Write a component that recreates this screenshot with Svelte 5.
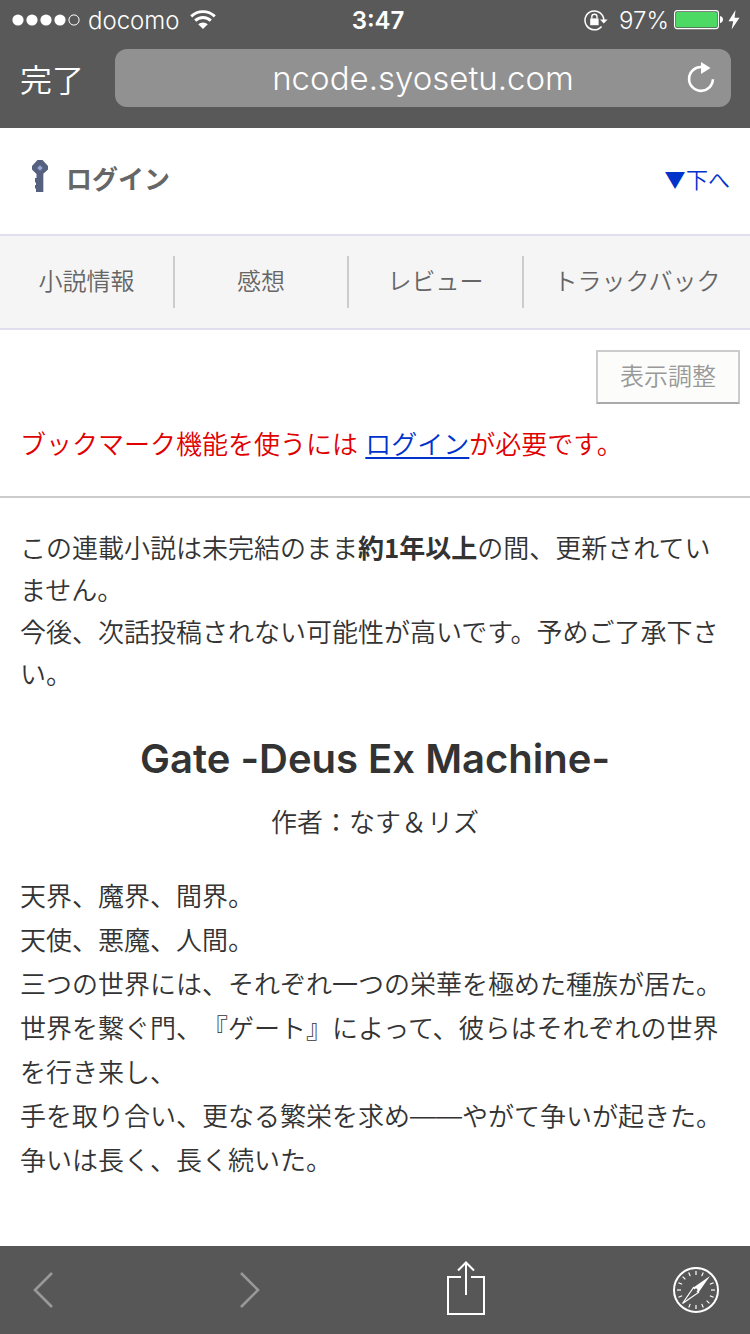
<script lang="ts">

  const signal: number[] = [1, 1, 1, 1, 0];

  const tabs: string[] = ['小説情報', '感想', 'レビュー', 'トラックバック'];

  const synopsis: string[] = [
    '天界、魔界、間界。',
    '天使、悪魔、人間。',
    '三つの世界には、それぞれ一つの栄華を極めた種族が居た。',
    '世界を繋ぐ門、『ゲート』によって、彼らはそれぞれの世界を行き来し、',
    '手を取り合い、更なる繁栄を求め――やがて争いが起きた。',
    '争いは長く、長く続いた。'
  ];

  // Compass ticks, the two under the needle are left out
  const ticks: number[] = Array.from({ length: 16 }, (_, i) => i * 22.5).filter(a => a !== 45 && a !== 225);

</script>

<div class="screen">

  <!-- Browser Header -->
  <header class="chrome">
    <div class="status">
      <div class="carrier">
        <svg width="68" height="12" viewBox="0 0 68 12" aria-hidden="true">
          {#each signal as on, i}
            <circle cx={6 + i * 14} cy="6" r={on ? 5.6 : 5.1} fill={on ? '#fff' : 'none'} stroke={on ? 'none' : '#fff'} />
          {/each}
        </svg>
        <span>docomo</span>
        <svg class="wifi" width="26" height="20" viewBox="0 0 26 20" aria-hidden="true">
          <path d="M1.2 6.4a17 17 0 0 1 23.6 0M5.2 10.6a11.2 11.2 0 0 1 15.6 0" fill="none" stroke="#fff" stroke-width="2.9" />
          <path d="M8.2 14.3a7 7 0 0 1 9.6 0L13 19z" fill="#fff" />
        </svg>
      </div>
      <span class="time">3:47</span>
      <div class="power">
        <svg class="lock" width="24" height="22" viewBox="0 0 24 22" aria-hidden="true">
          <path d="M17.6 17.4A9.4 9.4 0 1 1 19.8 11.5" fill="none" stroke="#fff" stroke-width="1.5" />
          <path d="M16 10.5h7.6L19.8 14.5z" fill="#fff" />
          <path d="M6.2 9.4h8.4v6.8H6.2z" fill="#fff" />
          <path d="M7.8 9.4V7.8a2.6 2.6 0 0 1 5.2 0v1.6" fill="none" stroke="#fff" stroke-width="1.4" />
        </svg>
        <span>97%</span>
        <svg width="49" height="20" viewBox="0 0 49 20" aria-hidden="true">
          <rect x=".6" y=".6" width="43.8" height="18" rx="2.5" fill="none" stroke="#fff" stroke-width="1.2" />
          <rect x="2" y="2" width="41" height="15.2" rx="1.5" fill="#4cd964" />
          <path d="M46 6q3 .8 3 3.6t-3 3.6z" fill="#fff" />
        </svg>
        <svg width="12" height="20" viewBox="0 0 12 20" aria-hidden="true">
          <path d="M7.5 0 .5 11.3h4.7L3.6 19.6 11.5 7.7H6.6z" fill="#fff" />
        </svg>
      </div>
    </div>
    <div class="address">
      <button class="done" type="button">完了</button>
      <div class="field">
        <span>ncode.syosetu.com</span>
        <button class="reload" type="button" aria-label="再読み込み">
          <svg width="28" height="32" viewBox="0 0 28 32">
            <path d="M14.8 6.1A11.9 11.9 0 1 0 25.9 18.3" fill="none" stroke="#fff" stroke-width="2.6" />
            <path d="M14 1v12l9.5-6z" fill="#fff" />
          </svg>
        </button>
      </div>
    </div>
  </header>

  <!-- Site Header -->
  <div class="login">
    <a class="key" href="#login">
      <svg width="18" height="32" viewBox="0 0 18 32" aria-hidden="true">
        <path d="M12 14h2v18h-2z" fill="#c3cad8" />
        <path d="M7.5 0h5L18 6v3.5L13 14v18H6v-3.5H5V25h1v-2.5H5V18h1.5v-4L2 9.5V6z" fill="#55617f" />
        <path d="M10 5.2 12.8 8 10 10.8 7.2 8z" fill="#99a3dc" />
      </svg>
      <span>ログイン</span>
    </a>
    <a class="down" href="#footer">▼下へ</a>
  </div>

  <nav class="tabs">
    {#each tabs as tab}
      <a href="#{tab}">{tab}</a>
    {/each}
  </nav>

  <!-- Novel -->
  <main>
    <div class="adjust">
      <button type="button">表示調整</button>
    </div>
    <p class="bookmark">ブックマーク機能を使うには <a href="#login">ログイン</a>が必要です。</p>
    <p class="notice">
      この連載小説は未完結のまま<strong>約1年以上</strong>の間、更新されていません。<br>
      今後、次話投稿されない可能性が高いです。予めご了承下さい。
    </p>
    <h1>Gate -Deus Ex Machine-</h1>
    <p class="author">作者：なす＆リズ</p>
    <div class="synopsis">
      {#each synopsis as line}
        <p>{line}</p>
      {/each}
    </div>
  </main>

  <!-- Browser Toolbar -->
  <footer class="toolbar" id="footer">
    <button type="button" aria-label="戻る" disabled>
      <svg width="48" height="48" viewBox="0 0 48 48">
        <path d="M32 7 15 24l17 17" fill="none" stroke="#999" stroke-width="2.6" />
      </svg>
    </button>
    <button type="button" aria-label="進む" disabled>
      <svg width="48" height="48" viewBox="0 0 48 48">
        <path d="M15 7 32 24 15 41" fill="none" stroke="#999" stroke-width="2.6" />
      </svg>
    </button>
    <button type="button" aria-label="共有">
      <svg width="38" height="58" viewBox="0 0 38 58">
        <path d="M14 16H1v37h36V16H24" fill="none" stroke="#fff" stroke-width="2" />
        <path d="M19 34V2M11 9.5l8-8 8 8" fill="none" stroke="#fff" stroke-width="2" />
      </svg>
    </button>
    <button type="button" aria-label="Safariで開く">
      <svg width="46" height="46" viewBox="0 0 46 46">
        <circle cx="23" cy="23" r="22" fill="none" stroke="#fff" stroke-width="2" />
        {#each ticks as angle}
          <path d="M23 4v4" stroke="#fff" stroke-width="1.2" transform="rotate({angle} 23 23)" />
        {/each}
        <path d="M37 9 20.5 20.5l5 5z" fill="#fff" />
        <path d="M9.5 36.5 20.5 20.5l5 5z" fill="none" stroke="#fff" stroke-width="1.2" />
        <circle cx="23" cy="23" r="1.4" fill="#575757" />
      </svg>
    </button>
  </footer>

</div>

<style>

  :global(body) {
    background: #fff;
  }

  div.screen {
    display: flex;
    flex-direction: column;
    min-height: 100vh;
    color: #333;
    font-family: Inter, "Noto Sans CJK JP", sans-serif;
    font-size: 26px;
    font-weight: 350;
    text-spacing-trim: space-all;
  }

  button {
    padding: 0;
    color: inherit;
    font: inherit;
    background: none;
    border: none;
  }

  svg {
    display: block;
  }

  p, h1 {
    margin: 0;
  }

  header.chrome {
    padding-bottom: 21px;
    color: #fff;
    background: #595959;
  }

  div.status {
    display: grid;
    grid-template-columns: 1fr auto 1fr;
    align-items: center;
    height: 40px;
    padding: 0 10px 0 12px;
    font-size: 24px;
  }

  div.carrier, div.power {
    display: flex;
    align-items: center;
    gap: 8px;
  }

  svg.wifi {
    margin-left: 2px;
  }

  div.power {
    justify-content: flex-end;
    gap: 5px;
  }

  svg.lock {
    margin-right: 6px;
  }

  span.time {
    padding-left: 4px;
    font-weight: 600;
  }

  div.address {
    display: flex;
    align-items: center;
    gap: 31px;
    padding: 9px 19px 0 20px;
    line-height: 58px;
  }

  button.done {
    font-family: "Noto Sans CJK JP", sans-serif;
    font-size: 32px;
  }

  div.field {
    position: relative;
    flex: 1;
    font-size: 33px;
    text-align: center;
    background: #919191;
    border-radius: 12px;
  }

  button.reload {
    position: absolute;
    top: 12px;
    right: 16px;
  }

  div.login {
    display: flex;
    justify-content: space-between;
    padding: 32px 20px 34px 30px;
    line-height: 40px;
  }

  a {
    color: #03c;
  }

  a.key {
    display: flex;
    gap: 18px;
    color: #666;
    font-weight: 700;
    text-decoration: none;
  }

  a.down {
    font-size: 22px;
    text-decoration: none;
  }

  nav.tabs {
    display: grid;
    grid-template-columns: 175fr 174fr 175fr 226fr;
    padding: 20px 0;
    background: #f5f5f5;
    border-top: 2px solid #dfdfef;
    border-bottom: 2px solid #dfdfef;
  }

  nav.tabs a {
    color: #666;
    font-size: 24px;
    line-height: 52px;
    text-align: center;
    text-decoration: none;
    border-right: 2px solid #ccc;
  }

  nav.tabs a:last-child {
    border-right: none;
  }

  main {
    flex: 1;
    padding-bottom: 60px;
  }

  div.adjust {
    display: flex;
    justify-content: flex-end;
    padding: 20px 10px 0;
  }

  div.adjust button {
    padding: 0 22px;
    color: #999;
    font-size: 24px;
    line-height: 50px;
    background: #fcfcfa;
    border: 2px solid #ccc;
    border-bottom-color: #aaa;
  }

  p.bookmark {
    padding: 21px 20px 31px;
    color: #e00000;
    line-height: 40px;
    border-bottom: 2px solid #ccc;
  }

  p.bookmark a {
    text-underline-offset: 3px;
  }

  p.notice {
    padding: 28px 20px 0;
    line-height: 42px;
  }

  strong {
    font-family: "Noto Sans CJK JP", sans-serif;
    font-weight: 700;
  }

  h1 {
    padding: 33px 20px 0;
    font-size: 40px;
    font-weight: 600;
    font-feature-settings: "calt" 0;
    line-height: 60px;
    text-align: center;
  }

  p.author {
    padding: 12px 20px 30px;
    line-height: 44px;
    text-align: center;
  }

  div.synopsis {
    padding: 0 20px;
    line-height: 44px;
  }

  footer.toolbar {
    position: sticky;
    bottom: 0;
    display: grid;
    grid-template-columns: 206fr 221fr 226fr 46fr;
    align-items: center;
    justify-items: start;
    height: 88px;
    padding: 0 31px 0 20px;
    background: #575757;
  }

</style>
